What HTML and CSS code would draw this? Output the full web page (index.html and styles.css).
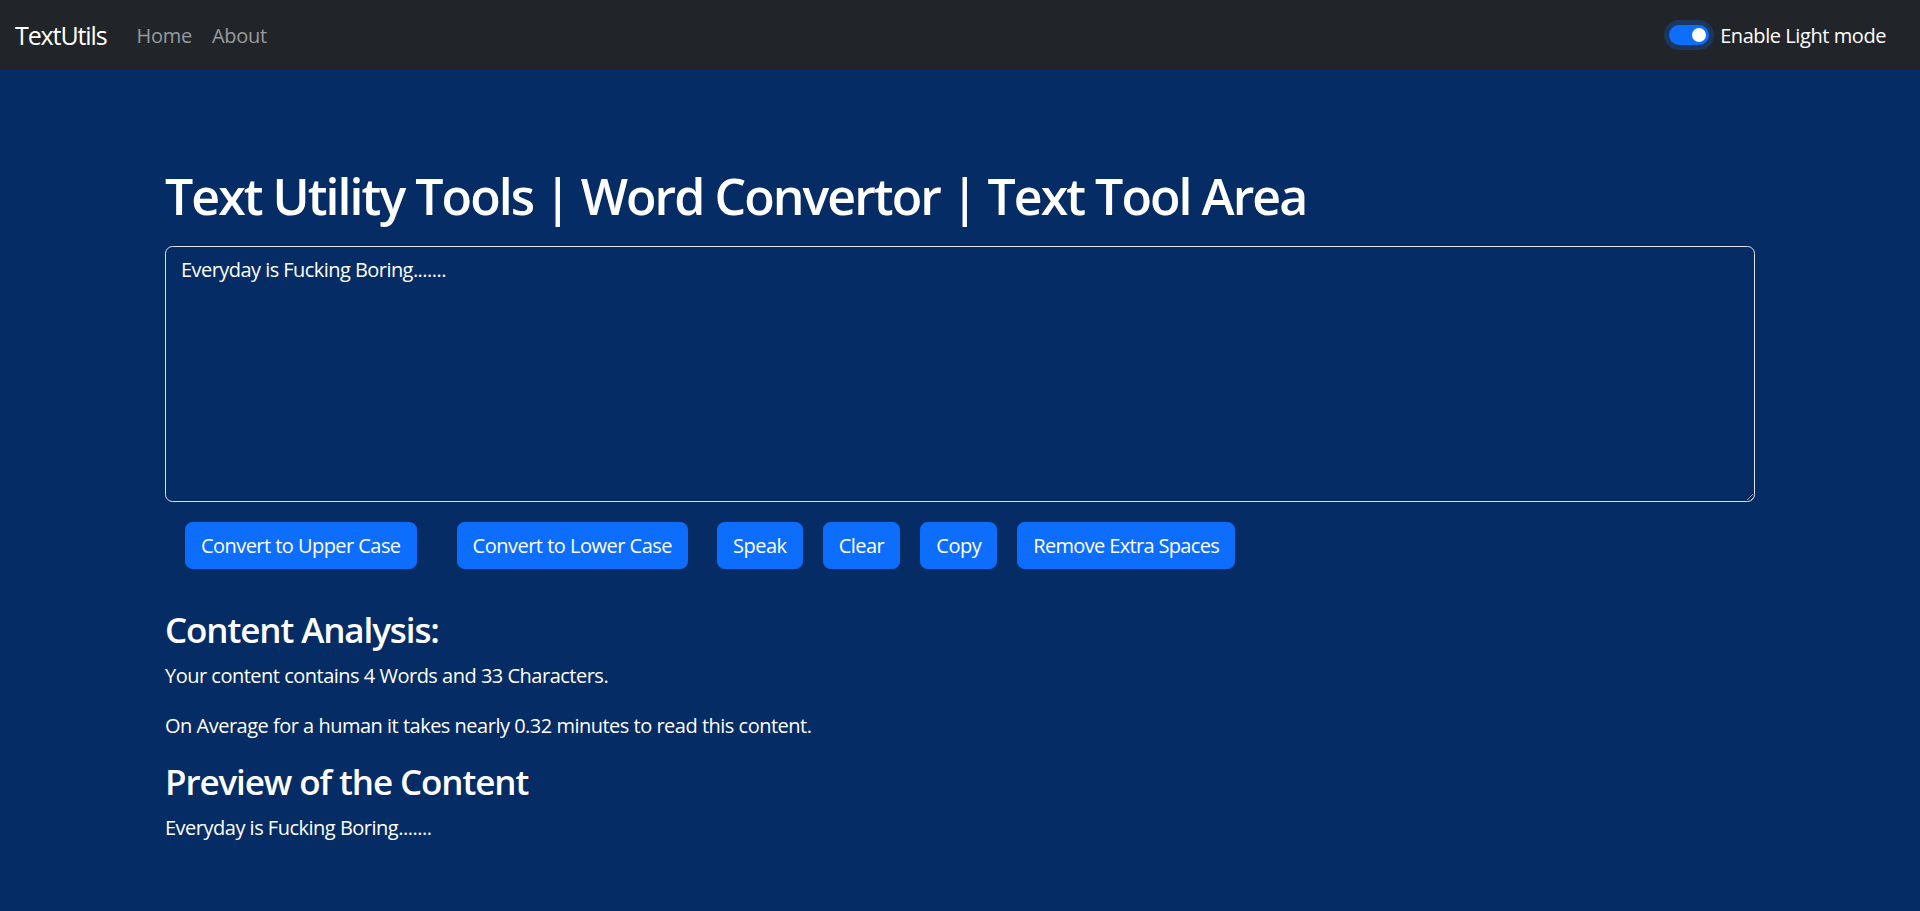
FILE: index.html
```html
<!DOCTYPE html>
<html lang="en">
<head>
<meta charset="utf-8">
<title>TextUtils - Home</title>
<link rel="stylesheet" href="styles.css">
</head>
<body>
<nav class="navbar">
  <a class="brand" href="#">TextUtils</a>
  <ul class="nav">
    <li><a class="nav-link" href="#">Home</a></li>
    <li><a class="nav-link" href="#">About</a></li>
  </ul>
  <div class="mode-switch">
    <span class="switch"><span class="knob"></span></span>
    <label class="switch-label">Enable Light mode</label>
  </div>
</nav>

<main class="container">
  <h1 class="title">Text Utility Tools | Word Convertor | Text Tool Area</h1>
  <textarea class="text-box" rows="8">Everyday is Fucking Boring.......</textarea>
  <div class="btn-row">
    <button class="btn btn-upper">Convert to Upper Case</button>
    <button class="btn btn-lower">Convert to Lower Case</button>
    <button class="btn btn-speak">Speak</button>
    <button class="btn">Clear</button>
    <button class="btn">Copy</button>
    <button class="btn btn-spaces">Remove Extra Spaces</button>
  </div>
</main>

<section class="container summary">
  <h3 class="sub-title">Content Analysis:</h3>
  <p class="para">Your content contains 4 Words and 33 Characters.</p>
  <p class="para">On Average for a human it takes nearly 0.32 minutes to read this content.</p>
  <h3 class="sub-title">Preview of the Content</h3>
  <p class="para">Everyday is Fucking Boring.......</p>
</section>
</body>
</html>
```

FILE: styles.css
```css
html, body {
  margin: 0;
  padding: 0;
}

body {
  background: #052c65;
  color: #ffffff;
  font-family: "Open Sans", "Noto Sans", sans-serif;
  font-size: 20px;
  line-height: 1.5;
  letter-spacing: -0.5px;
  min-height: 911px;
}

.navbar {
  display: flex;
  align-items: center;
  height: 70px;
  background: #212529;
  padding: 1px 34px 0 15px;
  box-sizing: border-box;
}

.brand {
  font-size: 25px;
  color: #ffffff;
  text-decoration: none;
  margin-right: 20px;
  line-height: 1.5;
  letter-spacing: -1.1px;
}

.nav {
  display: flex;
  list-style: none;
  margin: 0;
  padding: 0;
}

.nav-link {
  display: block;
  padding: 0 10px;
  color: rgba(255, 255, 255, 0.55);
  text-decoration: none;
  font-size: 20px;
  letter-spacing: -0.3px;
}

.mode-switch {
  margin-left: auto;
  display: flex;
  align-items: center;
}

.switch {
  position: relative;
  display: block;
  width: 40px;
  height: 20px;
  border-radius: 10px;
  background: #0d6efd;
  box-shadow: 0 0 0 5px rgba(13, 110, 253, 0.25);
  margin-top: -2px;
}

.knob {
  position: absolute;
  top: 3px;
  right: 3px;
  width: 14px;
  height: 14px;
  border-radius: 50%;
  background: #ffffff;
}

.switch-label {
  margin-left: 11px;
  font-size: 20px;
  color: #ffffff;
  letter-spacing: -0.43px;
}

.container {
  margin-left: 165px;
  width: 1590px;
}

main.container {
  padding-top: 96px;
}

.title {
  font-size: 50px;
  font-weight: 600;
  line-height: 1.2;
  margin: 0 0 20px 0;
  letter-spacing: -1.95px;
}

.text-box {
  display: block;
  box-sizing: border-box;
  width: 1590px;
  height: 256px;
  padding: 7.5px 15px;
  font-family: inherit;
  font-size: 20px;
  letter-spacing: -0.55px;
  line-height: 1.5;
  color: #ffffff;
  background: #052c65;
  border: 1px solid #dee2e6;
  border-radius: 7.5px;
  resize: vertical;
}

.btn-row {
  display: flex;
  margin-top: 20px;
}

.btn {
  font-family: inherit;
  font-size: 20px;
  letter-spacing: -0.5px;
  line-height: 1.5;
  color: #ffffff;
  background: #0d6efd;
  border: 1px solid #0d6efd;
  border-radius: 7.5px;
  padding: 7.5px 15px;
  margin-left: 20px;
  cursor: pointer;
}

.btn-upper { margin-left: 20px; letter-spacing: -0.55px; }
.btn-lower { margin-left: 40px; }
.btn-speak { margin-left: 29px; }
.btn-spaces { letter-spacing: -0.65px; }

.summary {
  margin-top: 40px;
}

.sub-title {
  font-size: 35px;
  font-weight: 600;
  line-height: 1.2;
  margin: 0 0 10px 0;
  letter-spacing: -1.1px;
}

.para {
  margin: 0 0 20px 0;
}
```
